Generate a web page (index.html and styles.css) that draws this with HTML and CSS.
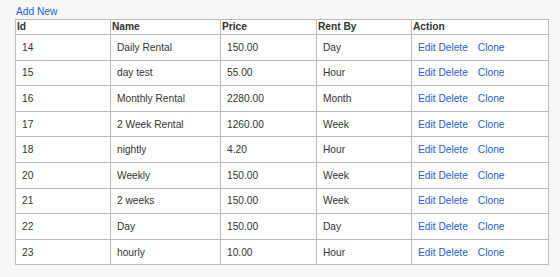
FILE: index.html
```html
<!DOCTYPE html>
<html>
<head>
<meta charset="utf-8">
<link rel="stylesheet" href="styles.css">
</head>
<body>
<div class="page">
  <a class="add-link" href="#">Add New</a>
  <table class="grid">
    <colgroup>
      <col class="c-id"><col class="c-name"><col class="c-price"><col class="c-rent"><col class="c-action">
    </colgroup>
    <thead>
      <tr><th>Id</th><th>Name</th><th>Price</th><th>Rent By</th><th>Action</th></tr>
    </thead>
    <tbody>
      <tr><td>14</td><td>Daily Rental</td><td>150.00</td><td>Day</td><td class="actions"><a href="#">Edit</a> <a href="#" class="del">Delete</a><a href="#">Clone</a></td></tr>
      <tr><td>15</td><td>day test</td><td>55.00</td><td>Hour</td><td class="actions"><a href="#">Edit</a> <a href="#" class="del">Delete</a><a href="#">Clone</a></td></tr>
      <tr><td>16</td><td>Monthly Rental</td><td>2280.00</td><td>Month</td><td class="actions"><a href="#">Edit</a> <a href="#" class="del">Delete</a><a href="#">Clone</a></td></tr>
      <tr><td>17</td><td>2 Week Rental</td><td>1260.00</td><td>Week</td><td class="actions"><a href="#">Edit</a> <a href="#" class="del">Delete</a><a href="#">Clone</a></td></tr>
      <tr><td>18</td><td>nightly</td><td>4.20</td><td>Hour</td><td class="actions"><a href="#">Edit</a> <a href="#" class="del">Delete</a><a href="#">Clone</a></td></tr>
      <tr><td>20</td><td>Weekly</td><td>150.00</td><td>Week</td><td class="actions"><a href="#">Edit</a> <a href="#" class="del">Delete</a><a href="#">Clone</a></td></tr>
      <tr><td>21</td><td>2 weeks</td><td>150.00</td><td>Week</td><td class="actions"><a href="#">Edit</a> <a href="#" class="del">Delete</a><a href="#">Clone</a></td></tr>
      <tr><td>22</td><td>Day</td><td>150.00</td><td>Day</td><td class="actions"><a href="#">Edit</a> <a href="#" class="del">Delete</a><a href="#">Clone</a></td></tr>
      <tr><td>23</td><td>hourly</td><td>10.00</td><td>Hour</td><td class="actions"><a href="#">Edit</a> <a href="#" class="del">Delete</a><a href="#">Clone</a></td></tr>
    </tbody>
  </table>
</div>
</body>
</html>
```

FILE: styles.css
```css
html, body {
  margin: 0;
  padding: 0;
  background: #f7f7f7;
}
body {
  font-family: "Liberation Sans", Arial, sans-serif;
  font-size: 10.2px;
  color: #333;
}
.page {
  padding: 5px 0 0 15px;
}
.add-link {
  display: block;
  line-height: 13px;
  height: 13px;
  margin-left: 1px;
}
a {
  color: #1a62d4;
  text-decoration: none;
}
.grid {
  border-collapse: collapse;
  table-layout: fixed;
  width: 533px;
  background: #fff;
  margin-top: 1px;
}
.c-id { width: 95px; }
.c-name { width: 110px; }
.c-price { width: 96px; }
.c-rent { width: 95px; }
.c-action { width: 137px; }
.grid th, .grid td {
  border: 1px solid #bbb;
  text-align: left;
  white-space: nowrap;
}
.grid th {
  font-weight: bold;
  padding: 0 1px;
  height: 14px;
  line-height: 13px;
  vertical-align: top;
}
.grid td {
  padding: 0 6px;
  height: 24.6px;
  line-height: 13px;
  vertical-align: middle;
}
.actions .del {
  margin-right: 10px;
}
```
